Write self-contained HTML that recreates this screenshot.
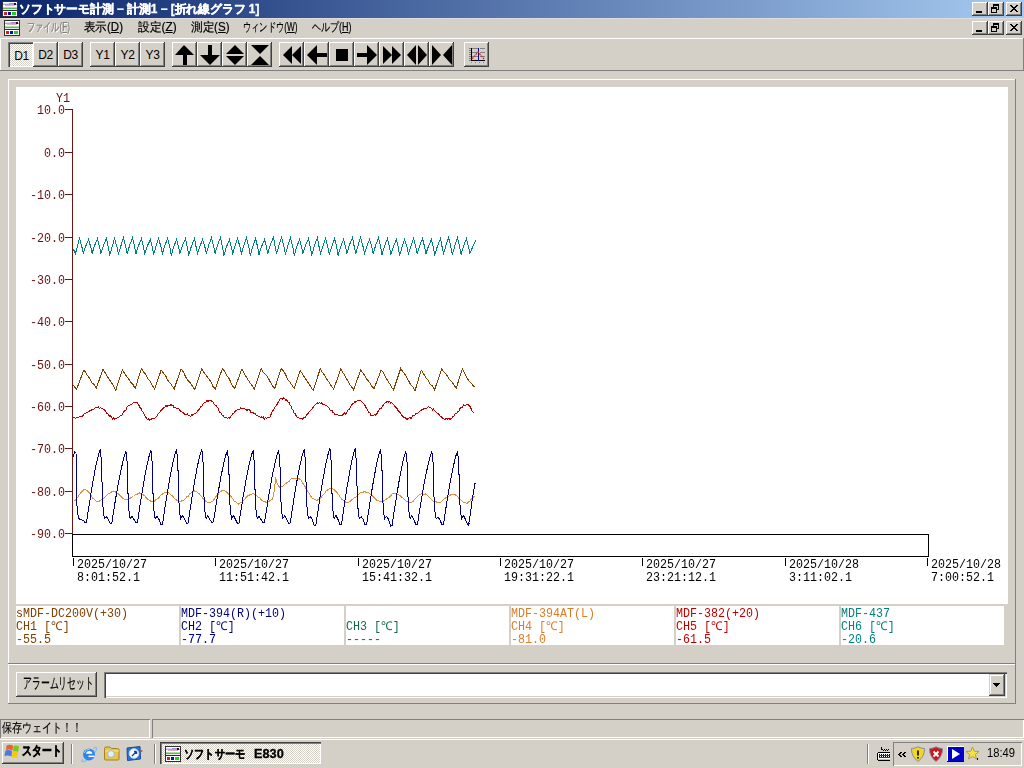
<!DOCTYPE html>
<html><head><meta charset="utf-8">
<style>
*{margin:0;padding:0;box-sizing:border-box}
html,body{width:1024px;height:768px;overflow:hidden;background:#D4D0C8;font-family:"Liberation Sans",sans-serif;font-size:12px;color:#000;position:relative}
.a{position:absolute}
.raised{background:#D4D0C8;box-shadow:inset -1px -1px 0 #404040, inset 1px 1px 0 #fff, inset -2px -2px 0 #808080}
.tb{position:absolute;top:42px;width:25px;height:25px;background:#D4D0C8;box-shadow:inset -1px -1px 0 #404040, inset 1px 1px 0 #fff, inset -2px -2px 0 #808080}
.tb span{position:absolute;left:0;top:7px;width:100%;text-align:center;font-size:12px;line-height:13px;letter-spacing:-0.3px}
.cap{position:absolute;width:16px;height:14px;background:#D4D0C8;box-shadow:inset -1px -1px 0 #404040, inset 1px 1px 0 #fff, inset -2px -2px 0 #808080}
.mono{font-family:"Liberation Mono",monospace}
.mt{position:absolute;font-family:"Liberation Mono",monospace;font-size:12px;line-height:13px;white-space:pre;transform:scaleX(0.972);transform-origin:0 0}
.menu{position:absolute;top:20px;font-size:12px;line-height:14px;transform-origin:0 0;white-space:nowrap;-webkit-text-stroke:0.2px currentColor}
</style></head><body>
<!-- title bar -->
<div class="a" style="left:0;top:0;width:1024px;height:18px;background:linear-gradient(to right,#0A246A,#A6CAF0)"></div>
<div class="a" style="left:19px;top:2px;color:#fff;font-weight:bold;font-size:12px;line-height:14px;white-space:nowrap;-webkit-text-stroke:0.35px #fff;transform:scaleX(0.985);transform-origin:0 0">ソフトサーモ計測 − 計測1 − [折れ線グラフ 1]</div>
<div class="a" style="left:2px;top:1px;width:16px;height:16px"><svg width="16" height="16" shape-rendering="crispEdges"><rect width="16" height="16" fill="#303030"/><rect x="1" y="1" width="14" height="7" fill="#fff"/><rect x="1" y="2" width="6" height="1" fill="#D8D8F8"/><rect x="7" y="2" width="7" height="1" fill="#9890D8"/><rect x="1" y="3" width="14" height="1" fill="#B0A0E0"/><rect x="3" y="4" width="10" height="1" fill="#E0B0C0"/><rect x="1" y="6" width="14" height="1" fill="#A8E0A0"/><rect x="1" y="7" width="14" height="1" fill="#60B860"/><rect x="12" y="2" width="2" height="2" fill="#400040"/><rect x="1" y="8" width="14" height="1" fill="#E8E8E8"/><rect x="1" y="9" width="14" height="1" fill="#303030"/><rect x="1" y="10" width="14" height="5" fill="#fff"/><rect x="2" y="11" width="3" height="3" fill="#D02020"/><rect x="6" y="11" width="3" height="3" fill="#0010C0"/><rect x="10" y="11" width="4" height="3" fill="#20D020"/></svg></div>
<div class="cap" style="left:972px;top:2px"><svg width="16" height="14" style="position:absolute;left:0;top:0" shape-rendering="crispEdges"><rect x="4" y="9" width="6" height="2" fill="#000"/></svg></div>
<div class="cap" style="left:988px;top:2px"><svg width="16" height="14" style="position:absolute;left:0;top:0" shape-rendering="crispEdges" fill="#000"><rect x="5" y="2" width="6" height="2"/><rect x="10" y="4" width="1" height="4"/><rect x="9" y="7" width="1" height="1"/><rect x="5" y="4" width="1" height="1"/><rect x="3" y="5" width="6" height="2"/><rect x="3" y="7" width="1" height="4"/><rect x="8" y="7" width="1" height="4"/><rect x="3" y="10" width="6" height="1"/></svg></div>
<div class="cap" style="left:1006px;top:2px"><svg width="16" height="14" style="position:absolute;left:0;top:0" shape-rendering="crispEdges" fill="#000"><rect x="4" y="3" width="1" height="1"/><rect x="5" y="3" width="1" height="1"/><rect x="10" y="3" width="1" height="1"/><rect x="11" y="3" width="1" height="1"/><rect x="5" y="4" width="1" height="1"/><rect x="6" y="4" width="1" height="1"/><rect x="9" y="4" width="1" height="1"/><rect x="10" y="4" width="1" height="1"/><rect x="6" y="5" width="1" height="1"/><rect x="7" y="5" width="1" height="1"/><rect x="8" y="5" width="1" height="1"/><rect x="9" y="5" width="1" height="1"/><rect x="7" y="6" width="1" height="1"/><rect x="8" y="6" width="1" height="1"/><rect x="6" y="7" width="1" height="1"/><rect x="7" y="7" width="1" height="1"/><rect x="8" y="7" width="1" height="1"/><rect x="9" y="7" width="1" height="1"/><rect x="5" y="8" width="1" height="1"/><rect x="6" y="8" width="1" height="1"/><rect x="9" y="8" width="1" height="1"/><rect x="10" y="8" width="1" height="1"/><rect x="4" y="9" width="1" height="1"/><rect x="5" y="9" width="1" height="1"/><rect x="10" y="9" width="1" height="1"/><rect x="11" y="9" width="1" height="1"/></svg></div>
<!-- menu bar -->
<div class="a" style="left:0;top:18px;width:1024px;height:1px;background:#DEDCE2"></div>
<div class="a" style="left:4px;top:20px;width:16px;height:16px"><svg width="16" height="16" shape-rendering="crispEdges"><rect width="16" height="16" fill="#303030"/><rect x="1" y="1" width="14" height="7" fill="#fff"/><rect x="1" y="2" width="6" height="1" fill="#D8D8F8"/><rect x="7" y="2" width="7" height="1" fill="#9890D8"/><rect x="1" y="3" width="14" height="1" fill="#B0A0E0"/><rect x="3" y="4" width="10" height="1" fill="#E0B0C0"/><rect x="1" y="6" width="14" height="1" fill="#A8E0A0"/><rect x="1" y="7" width="14" height="1" fill="#60B860"/><rect x="12" y="2" width="2" height="2" fill="#400040"/><rect x="1" y="8" width="14" height="1" fill="#E8E8E8"/><rect x="1" y="9" width="14" height="1" fill="#303030"/><rect x="1" y="10" width="14" height="5" fill="#fff"/><rect x="2" y="11" width="3" height="3" fill="#D02020"/><rect x="6" y="11" width="3" height="3" fill="#0010C0"/><rect x="10" y="11" width="4" height="3" fill="#20D020"/></svg></div>
<div class="menu" style="left:27px;transform:scaleX(0.679);color:#808080;text-shadow:1px 1px 0 #fff">ファイル(<u>F</u>)</div>
<div class="menu" style="left:84px;transform:scaleX(0.958);">表示(<u>D</u>)</div>
<div class="menu" style="left:138px;transform:scaleX(0.980);">設定(<u>Z</u>)</div>
<div class="menu" style="left:191px;transform:scaleX(0.963);">測定(<u>S</u>)</div>
<div class="menu" style="left:243px;transform:scaleX(0.687);">ウィンドウ(<u>W</u>)</div>
<div class="menu" style="left:312px;transform:scaleX(0.75);">ヘルプ(<u>H</u>)</div>
<div class="cap" style="left:972px;top:21px"><svg width="16" height="14" style="position:absolute;left:0;top:0" shape-rendering="crispEdges"><rect x="4" y="9" width="6" height="2" fill="#000"/></svg></div>
<div class="cap" style="left:988px;top:21px"><svg width="16" height="14" style="position:absolute;left:0;top:0" shape-rendering="crispEdges" fill="#000"><rect x="5" y="2" width="6" height="2"/><rect x="10" y="4" width="1" height="4"/><rect x="9" y="7" width="1" height="1"/><rect x="5" y="4" width="1" height="1"/><rect x="3" y="5" width="6" height="2"/><rect x="3" y="7" width="1" height="4"/><rect x="8" y="7" width="1" height="4"/><rect x="3" y="10" width="6" height="1"/></svg></div>
<div class="cap" style="left:1006px;top:21px"><svg width="16" height="14" style="position:absolute;left:0;top:0" shape-rendering="crispEdges" fill="#000"><rect x="4" y="3" width="1" height="1"/><rect x="5" y="3" width="1" height="1"/><rect x="10" y="3" width="1" height="1"/><rect x="11" y="3" width="1" height="1"/><rect x="5" y="4" width="1" height="1"/><rect x="6" y="4" width="1" height="1"/><rect x="9" y="4" width="1" height="1"/><rect x="10" y="4" width="1" height="1"/><rect x="6" y="5" width="1" height="1"/><rect x="7" y="5" width="1" height="1"/><rect x="8" y="5" width="1" height="1"/><rect x="9" y="5" width="1" height="1"/><rect x="7" y="6" width="1" height="1"/><rect x="8" y="6" width="1" height="1"/><rect x="6" y="7" width="1" height="1"/><rect x="7" y="7" width="1" height="1"/><rect x="8" y="7" width="1" height="1"/><rect x="9" y="7" width="1" height="1"/><rect x="5" y="8" width="1" height="1"/><rect x="6" y="8" width="1" height="1"/><rect x="9" y="8" width="1" height="1"/><rect x="10" y="8" width="1" height="1"/><rect x="4" y="9" width="1" height="1"/><rect x="5" y="9" width="1" height="1"/><rect x="10" y="9" width="1" height="1"/><rect x="11" y="9" width="1" height="1"/></svg></div>
<!-- toolbar -->
<div class="a" style="left:0;top:38px;width:1024px;height:33px;box-shadow:inset -1px -1px 0 #808080, inset 1px 1px 0 #fff"></div>
<div class="tb" style="left:8px;box-shadow:inset 1px 1px 0 #808080, inset 2px 2px 0 #404040, inset -1px -1px 0 #fff;background:repeating-conic-gradient(#fff 0 25%,#D4D0C8 0 50%) 0 0/2px 2px"><span style="left:1px;top:8px">D1</span></div>
<div class="tb" style="left:33px"><span>D2</span></div>
<div class="tb" style="left:58px"><span>D3</span></div>
<div class="tb" style="left:90px"><span>Y1</span></div>
<div class="tb" style="left:115px"><span>Y2</span></div>
<div class="tb" style="left:140px"><span>Y3</span></div>
<div class="tb" style="left:172px"><svg width="25" height="25" style="position:absolute;left:0;top:0" fill="#000"><polygon points="3,13 11.5,3.5 12.5,3.5 22,13"/><rect x="11" y="13" width="4" height="10"/></svg></div>
<div class="tb" style="left:197px"><svg width="25" height="25" style="position:absolute;left:0;top:0" fill="#000"><rect x="11" y="3" width="4" height="10"/><polygon points="3,13 23,13 13,23"/></svg></div>
<div class="tb" style="left:222px"><svg width="25" height="25" style="position:absolute;left:0;top:0" fill="#000"><polygon points="4,12 13,3 22,12"/><polygon points="4,14 22,14 13,23"/></svg></div>
<div class="tb" style="left:247px"><svg width="25" height="25" style="position:absolute;left:0;top:0" fill="#000"><polygon points="4,3 22,3 13,12"/><polygon points="13,14 22,23 4,23"/></svg></div>
<div class="tb" style="left:279px"><svg width="25" height="25" style="position:absolute;left:0;top:0" fill="#000"><polygon points="4,13 13,4 13,22"/><polygon points="13,13 22,4 22,22"/></svg></div>
<div class="tb" style="left:304px"><svg width="25" height="25" style="position:absolute;left:0;top:0" fill="#000"><polygon points="3,13 13,3 13,23"/><rect x="13" y="11" width="10" height="4"/></svg></div>
<div class="tb" style="left:329px"><svg width="25" height="25" style="position:absolute;left:0;top:0" fill="#000"><rect x="7" y="7" width="12" height="12"/></svg></div>
<div class="tb" style="left:354px"><svg width="25" height="25" style="position:absolute;left:0;top:0" fill="#000"><rect x="3" y="11" width="10" height="4"/><polygon points="13,3 23,13 13,23"/></svg></div>
<div class="tb" style="left:379px"><svg width="25" height="25" style="position:absolute;left:0;top:0" fill="#000"><polygon points="4,4 13,13 4,22"/><polygon points="13,4 22,13 13,22"/></svg></div>
<div class="tb" style="left:404px"><svg width="25" height="25" style="position:absolute;left:0;top:0" fill="#000"><polygon points="3,13 12,3 12,23"/><polygon points="14,3 23,13 14,23"/></svg></div>
<div class="tb" style="left:429px"><svg width="25" height="25" style="position:absolute;left:0;top:0" fill="#000"><polygon points="3,3 12,13 3,23"/><polygon points="23,3 14,13 23,23"/></svg></div>
<div class="tb" style="left:464px"><svg width="25" height="25" style="position:absolute;left:0;top:0" shape-rendering="crispEdges">
<g fill="#808080"><rect x="5" y="6" width="16" height="1"/><rect x="5" y="10" width="16" height="1"/><rect x="5" y="14" width="16" height="1"/><rect x="5" y="18" width="2" height="1"/><rect x="5" y="8" width="2" height="1"/><rect x="5" y="12" width="2" height="1"/><rect x="5" y="16" width="2" height="1"/>
<rect x="7" y="20" width="1" height="1"/><rect x="11" y="20" width="1" height="1"/><rect x="15" y="20" width="1" height="1"/><rect x="19" y="20" width="1" height="1"/></g>
<rect x="7" y="6" width="1" height="13" fill="#000"/><rect x="7" y="18" width="14" height="1" fill="#000"/>
<rect x="14" y="6" width="1" height="13" fill="#101090"/><rect x="15" y="6" width="1" height="12" fill="#C8C8FF"/>
<polyline points="8,17 14,10 20,17" fill="none" stroke="#C83030" stroke-width="1.2" stroke-dasharray="2 0.8" shape-rendering="auto"/>
</svg></div>
<!-- chart panel -->
<div class="a" style="left:8px;top:79px;width:1008px;height:585px;box-shadow:inset -1px -1px 0 #808080, inset 1px 1px 0 #fff"></div>
<div class="a" style="left:16px;top:87px;width:992px;height:517px;background:#fff"></div>
<div class="a" style="left:16px;top:606px;width:163px;height:39px;background:#fff"></div><div class="a" style="left:181px;top:606px;width:163px;height:39px;background:#fff"></div><div class="a" style="left:346px;top:606px;width:163px;height:39px;background:#fff"></div><div class="a" style="left:511px;top:606px;width:163px;height:39px;background:#fff"></div><div class="a" style="left:676px;top:606px;width:163px;height:39px;background:#fff"></div><div class="a" style="left:841px;top:606px;width:163px;height:39px;background:#fff"></div>
<!--CHART-->
<svg class="a" style="left:0;top:0" width="1024" height="768">
<g stroke="#6E1414" stroke-width="1" shape-rendering="crispEdges" fill="none">
<line x1="72.5" y1="109" x2="72.5" y2="534"/>
<line x1="65" y1="109.5" x2="72" y2="109.5"/>
<line x1="65" y1="152.5" x2="72" y2="152.5"/>
<line x1="65" y1="194.5" x2="72" y2="194.5"/>
<line x1="65" y1="237.5" x2="72" y2="237.5"/>
<line x1="65" y1="279.5" x2="72" y2="279.5"/>
<line x1="65" y1="321.5" x2="72" y2="321.5"/>
<line x1="65" y1="364.5" x2="72" y2="364.5"/>
<line x1="65" y1="406.5" x2="72" y2="406.5"/>
<line x1="65" y1="448.5" x2="72" y2="448.5"/>
<line x1="65" y1="491.5" x2="72" y2="491.5"/>
<line x1="65" y1="533.5" x2="72" y2="533.5"/>
</g>
<rect x="72.5" y="534.5" width="856" height="22" fill="none" stroke="#000" shape-rendering="crispEdges"/>
<g stroke="#000" shape-rendering="crispEdges">
<line x1="73.5" y1="558" x2="73.5" y2="566"/>
<line x1="215.5" y1="558" x2="215.5" y2="566"/>
<line x1="358.5" y1="558" x2="358.5" y2="566"/>
<line x1="500.5" y1="558" x2="500.5" y2="566"/>
<line x1="642.5" y1="558" x2="642.5" y2="566"/>
<line x1="785.5" y1="558" x2="785.5" y2="566"/>
<line x1="927.5" y1="558" x2="927.5" y2="566"/>
</g>
<polyline fill="none" stroke="#008080" stroke-width="1" shape-rendering="crispEdges" points="73.5,249.5 75.5,253.5 77.7,245.2 79.5,238.5 81.8,246.5 83.3,253.5 85.9,245.8 88.5,239.5 90.6,246.5 92.1,253.5 94.7,245.2 97.5,238.5 99.4,246.5 100.9,253.5 103.5,245.2 106.5,238.5 108.2,246.5 109.7,255.5 112.3,246.2 114.5,238.5 116.9,246.5 118.4,254.5 121.1,245.2 123.5,237.5 125.7,246.5 127.2,253.5 129.9,244.7 132.5,237.5 134.5,246.5 136.0,253.5 138.7,245.2 141.5,238.5 143.3,246.5 144.8,253.5 147.4,245.8 150.5,239.5 152.1,246.5 153.6,254.5 156.2,245.7 158.5,238.5 160.9,246.5 162.4,253.5 165.0,245.2 167.5,238.5 169.7,246.5 171.2,255.5 173.8,246.7 176.5,239.5 178.4,246.5 179.9,253.5 182.6,245.2 185.5,238.5 187.2,246.5 188.7,255.5 191.4,246.2 194.5,238.5 196.0,246.5 197.5,253.5 200.2,245.8 202.5,239.5 204.8,246.5 206.3,253.5 208.9,244.7 211.5,237.5 213.6,246.5 215.1,253.5 217.7,244.7 220.5,237.5 222.4,246.5 223.9,255.5 226.5,246.7 229.5,239.5 231.2,246.5 232.7,253.5 235.3,245.2 237.5,238.5 239.9,246.5 241.4,253.5 244.1,244.7 246.5,237.5 248.7,246.5 250.2,255.5 252.9,246.2 255.5,238.5 257.5,246.5 259.0,254.5 261.7,246.2 264.5,239.5 266.3,246.5 267.8,253.5 270.4,244.7 273.5,237.5 275.1,246.5 276.6,253.5 279.2,244.7 281.5,237.5 283.9,246.5 285.4,254.5 288.0,245.2 290.5,237.5 292.7,246.5 294.2,255.5 296.8,246.7 299.5,239.5 301.4,246.5 302.9,253.5 305.6,245.2 308.5,238.5 310.2,246.5 311.7,255.5 314.4,245.6 317.5,237.5 319.0,246.5 320.5,253.5 323.2,245.2 325.5,238.5 327.8,246.5 329.3,254.5 332.0,245.7 334.5,238.5 336.6,246.5 338.1,255.5 340.7,246.7 343.5,239.5 345.4,246.5 346.9,253.5 349.5,244.7 352.5,237.5 354.2,246.5 355.7,253.5 358.3,244.7 360.5,237.5 363.0,246.5 364.5,253.5 367.1,245.8 369.5,239.5 371.7,246.5 373.2,253.5 375.9,244.7 378.5,237.5 380.5,246.5 382.0,254.5 384.7,245.7 387.5,238.5 389.3,246.5 390.8,254.5 393.5,246.2 396.5,239.5 398.1,246.5 399.6,255.5 402.2,246.7 404.5,239.5 406.9,246.5 408.4,254.5 411.0,245.7 413.5,238.5 415.7,246.5 417.2,253.5 419.8,245.2 422.5,238.5 424.5,246.5 426.0,253.5 428.6,245.8 431.5,239.5 433.2,246.5 434.7,255.5 437.4,246.2 440.5,238.5 442.0,246.5 443.5,253.5 446.2,244.7 448.5,237.5 450.8,246.5 452.3,254.5 455.0,245.2 457.5,237.5 459.6,246.5 461.1,254.5 463.7,245.7 466.5,238.5 468.4,246.5 469.9,253.5 475.5,240.5"/>
<polyline fill="none" stroke="#804000" stroke-width="1" shape-rendering="crispEdges" points="73.5,385.5 76.5,389.5 83.9,370.0 86.0,373.1 88.0,376.2 90.1,379.2 92.1,383.1 94.2,384.6 96.2,388.5 103.0,369.0 105.1,372.6 107.2,376.2 109.3,379.8 111.5,382.5 113.6,386.1 115.7,390.5 122.3,370.0 124.4,373.1 126.6,376.2 128.8,379.2 130.9,382.3 133.0,384.6 135.2,388.5 141.4,368.5 143.6,371.9 145.8,374.5 148.1,378.8 150.3,381.4 152.5,385.6 154.7,389.0 161.2,370.0 163.4,373.2 165.5,375.5 167.7,380.3 169.9,382.7 172.0,385.8 174.2,389.0 180.9,369.0 183.2,371.6 185.5,376.6 187.8,380.1 190.1,382.7 192.4,386.1 194.7,389.5 201.9,368.5 204.1,372.7 206.3,375.3 208.6,378.8 210.8,381.4 213.0,386.4 215.2,389.0 222.4,368.5 224.4,371.0 226.5,375.2 228.6,377.7 230.6,381.8 232.6,386.0 234.7,388.5 241.9,369.0 243.9,373.1 246.0,376.5 248.1,379.8 250.1,383.1 252.1,385.7 254.2,389.0 261.3,368.5 263.5,372.6 265.8,374.4 268.0,377.7 270.2,381.8 272.5,386.0 274.7,388.5 281.2,368.5 283.4,371.0 285.5,374.4 287.6,379.3 289.8,381.8 292.0,385.2 294.1,388.5 300.2,370.5 302.4,373.8 304.5,377.2 306.7,380.5 308.9,383.8 311.0,387.2 313.2,390.5 320.3,368.5 322.5,372.7 324.8,375.3 327.0,379.6 329.2,382.2 331.5,386.4 333.7,389.0 340.8,369.0 342.9,372.5 345.0,376.0 347.1,379.5 349.3,383.8 351.4,386.5 353.5,390.0 360.7,370.0 362.9,373.1 365.2,376.2 367.4,380.1 369.6,382.3 371.9,386.2 374.1,388.5 381.2,370.0 383.2,372.5 385.3,376.7 387.4,380.0 389.4,383.3 391.4,386.7 393.5,390.0 400.7,368.5 403.1,372.2 405.5,375.0 407.9,379.5 410.3,384.0 412.7,386.8 415.1,390.5 421.2,370.0 423.4,373.3 425.6,377.5 427.9,380.0 430.1,384.1 432.3,385.9 434.5,390.0 441.7,369.0 444.1,372.2 446.5,374.7 448.9,378.8 451.3,381.2 453.7,384.4 456.1,388.5 462.3,369.0 468.5,380.5 474.5,387.0"/>
<polyline fill="none" stroke="#C00000" stroke-width="1" shape-rendering="crispEdges" points="73.5,417.5 74.7,418.0 75.7,418.5 76.8,417.3 77.8,417.1 78.8,417.3 79.8,416.4 80.8,416.9 81.9,416.8 82.9,415.8 83.9,414.1 85.0,413.9 86.0,413.2 87.0,412.5 88.0,411.8 89.0,411.6 90.1,410.4 91.1,410.2 92.1,409.2 93.2,410.1 94.2,409.1 95.2,407.7 96.2,407.9 97.2,407.7 98.3,406.5 99.3,408.5 100.3,407.6 101.4,408.5 102.4,408.6 103.4,409.3 104.4,409.8 105.5,411.3 106.5,413.4 107.5,413.6 108.5,414.7 109.6,416.2 110.6,415.7 111.6,417.4 112.6,419.0 113.7,417.9 114.7,419.0 115.7,418.4 116.8,418.1 117.8,417.6 118.8,417.0 119.8,416.2 120.8,415.2 121.9,415.1 122.9,413.0 123.9,411.8 124.9,410.5 126.0,410.2 127.0,407.0 128.0,405.9 129.0,405.3 130.1,404.8 131.1,405.0 132.1,403.9 133.1,402.9 134.2,402.1 135.2,403.0 136.2,402.7 137.2,402.8 138.3,404.9 139.3,405.7 140.3,408.3 141.3,408.6 142.3,411.5 143.4,412.4 144.4,414.7 145.4,417.3 146.4,417.6 147.5,419.7 148.5,418.8 149.5,420.0 150.5,419.4 151.6,419.1 152.6,418.2 153.6,418.5 154.6,418.2 155.7,417.3 156.7,416.3 157.7,414.7 158.7,413.1 159.8,412.4 160.8,410.8 161.8,409.7 162.8,408.7 163.9,407.8 164.9,407.0 165.9,405.3 166.9,406.9 168.0,405.1 169.0,406.0 170.0,405.6 171.0,404.7 172.1,405.5 173.1,405.4 174.1,407.8 175.1,407.9 176.2,408.0 177.2,408.7 178.2,408.4 179.2,409.1 180.3,410.9 181.3,411.6 182.3,412.3 183.3,412.5 184.4,414.1 185.4,414.7 186.4,414.6 187.4,414.0 188.5,415.8 189.5,415.4 190.5,416.5 191.5,414.9 192.6,415.1 193.6,414.1 194.6,413.4 195.7,413.1 196.7,412.1 197.7,411.0 198.8,409.8 199.8,408.6 200.8,406.4 201.8,406.2 202.9,404.5 203.9,402.9 204.9,402.9 206.0,402.1 207.0,400.4 208.0,401.9 209.1,400.1 210.1,400.5 211.1,400.7 212.2,401.7 213.2,402.0 214.2,404.1 215.2,405.0 216.2,405.1 217.3,407.2 218.3,408.5 219.3,412.3 220.3,412.4 221.4,413.5 222.4,415.9 223.4,416.0 224.4,417.8 225.5,417.3 226.5,417.5 227.5,418.4 228.5,417.5 229.6,418.4 230.6,416.1 231.6,415.7 232.6,413.6 233.7,413.5 234.7,411.9 235.7,410.8 236.7,410.4 237.7,409.6 238.8,409.0 239.8,409.6 240.8,407.5 241.8,409.0 242.9,408.7 243.9,407.9 244.9,409.1 245.9,409.5 247.0,410.4 248.0,409.3 249.0,409.8 250.1,410.4 251.1,413.0 252.1,412.1 253.1,412.7 254.2,413.8 255.2,413.4 256.2,415.0 257.2,415.6 258.3,416.2 259.3,416.7 260.3,417.1 261.4,417.0 262.4,417.9 263.4,417.1 264.4,419.3 265.5,417.5 266.5,418.5 267.5,417.8 268.5,417.7 269.6,417.8 270.6,415.6 271.6,413.1 272.6,411.3 273.6,409.5 274.6,407.5 275.7,406.5 276.7,405.2 277.7,402.9 278.7,402.4 279.7,399.2 280.8,398.3 281.8,398.2 282.8,399.5 283.8,397.7 284.9,399.1 285.9,400.3 286.9,399.8 287.9,402.1 289.0,402.5 290.0,405.1 291.0,406.3 292.1,409.5 293.1,410.2 294.1,412.9 295.1,413.5 296.2,415.9 297.2,417.2 298.2,417.2 299.2,417.9 300.3,418.8 301.3,418.5 302.3,419.4 303.3,418.0 304.3,417.4 305.3,417.1 306.4,415.6 307.4,414.0 308.4,413.2 309.4,411.4 310.4,410.5 311.4,409.6 312.4,408.3 313.4,407.0 314.4,405.4 315.5,404.4 316.5,403.6 317.5,403.0 318.5,403.6 319.5,402.5 320.5,403.1 321.6,402.8 322.6,404.2 323.6,404.7 324.7,404.4 325.7,405.7 326.7,405.5 327.8,407.0 328.8,408.0 329.9,409.5 330.9,411.0 331.9,410.0 333.0,413.0 334.0,412.8 335.0,414.6 336.1,414.3 337.1,414.8 338.1,415.2 339.2,415.4 340.2,416.0 341.2,415.4 342.2,415.1 343.2,414.6 344.3,412.9 345.3,414.1 346.3,413.1 347.3,411.5 348.3,409.8 349.3,409.6 350.4,407.4 351.4,405.2 352.4,404.0 353.4,403.9 354.4,401.9 355.4,402.1 356.5,401.4 357.5,400.4 358.5,400.6 359.5,400.5 360.5,400.7 361.6,401.4 362.6,402.4 363.7,403.7 364.7,404.8 365.7,407.1 366.8,408.9 367.8,410.2 368.8,412.3 369.9,413.1 370.9,415.6 372.0,414.8 373.0,416.0 374.0,414.8 375.1,414.9 376.1,415.2 377.1,413.2 378.2,411.0 379.2,409.7 380.2,408.2 381.3,408.8 382.3,406.8 383.3,405.0 384.4,403.8 385.4,402.8 386.4,402.1 387.5,401.2 388.5,402.0 389.5,401.6 390.5,403.0 391.6,402.6 392.6,403.5 393.6,404.5 394.6,406.2 395.7,407.1 396.7,408.0 397.7,410.0 398.7,411.5 399.7,411.9 400.8,413.8 401.8,415.5 402.8,416.5 403.8,417.4 404.9,417.5 405.9,418.4 406.9,419.5 407.9,418.4 409.0,418.3 410.0,417.0 411.0,418.5 412.0,417.0 413.1,415.4 414.1,415.8 415.1,415.0 416.2,413.2 417.2,413.9 418.2,412.6 419.2,411.8 420.3,411.0 421.3,410.2 422.3,409.6 423.4,409.0 424.4,408.5 425.4,408.0 426.4,408.2 427.5,407.6 428.5,406.5 429.5,407.1 430.5,407.9 431.6,408.3 432.6,409.9 433.6,408.6 434.6,411.0 435.7,411.4 436.7,412.5 437.7,413.5 438.7,414.0 439.7,415.6 440.8,416.5 441.8,417.4 442.8,418.1 443.8,418.7 444.9,419.6 445.9,418.4 446.9,418.5 447.9,419.4 449.0,418.1 450.0,419.7 451.0,418.1 452.0,418.3 453.1,416.4 454.1,415.9 455.1,413.8 456.2,413.7 457.2,413.0 458.2,411.3 459.3,410.7 460.3,407.6 461.3,407.1 462.4,407.7 463.4,404.9 464.4,405.3 465.4,405.4 466.5,404.6 467.5,404.5 468.5,404.9 469.5,406.0 470.5,407.1 471.5,409.9 472.5,411.5 473.5,412.6 474.5,412.5"/>
<polyline fill="none" stroke="#E0903A" stroke-width="1" shape-rendering="crispEdges" points="73.5,500.5 75.1,500.5 76.8,498.4 78.4,496.2 80.1,493.8 81.7,491.6 83.4,490.0 85.0,489.5 86.5,490.5 88.1,491.3 89.6,493.2 91.2,495.5 92.7,498.3 94.2,499.2 95.8,501.0 97.3,501.0 98.9,501.3 100.5,500.5 102.2,499.4 103.8,498.5 105.4,496.5 107.0,495.0 108.6,493.6 110.3,493.0 111.9,491.7 113.5,491.5 115.1,491.8 116.6,492.7 118.2,493.5 119.8,495.5 121.3,497.0 122.9,498.3 124.4,499.2 126.0,499.5 127.5,499.3 129.0,498.8 130.5,498.0 132.0,497.0 133.5,496.5 135.0,495.0 136.5,494.7 138.0,493.7 139.5,493.0 141.1,493.8 142.8,494.7 144.4,495.5 146.0,497.5 147.6,499.0 149.2,500.3 150.9,501.2 152.5,501.5 154.0,501.7 155.5,499.9 157.0,499.2 158.5,498.3 160.0,496.2 161.5,494.8 163.0,493.6 164.5,492.8 166.0,492.5 167.6,492.3 169.2,493.1 170.8,494.8 172.4,495.7 174.1,498.3 175.7,499.2 177.3,500.9 178.9,501.2 180.5,501.5 182.1,500.7 183.6,500.3 185.2,499.0 186.7,496.9 188.3,496.1 189.8,493.5 191.4,492.7 192.9,491.3 194.5,491.0 196.1,491.3 197.7,492.8 199.3,493.8 200.9,496.0 202.6,498.0 204.2,499.8 205.8,501.2 207.4,502.2 209.0,502.5 210.6,502.1 212.2,501.6 213.8,500.0 215.4,497.0 217.1,495.5 218.7,493.5 220.3,491.4 221.9,490.9 223.5,491.0 225.0,490.8 226.5,491.7 228.0,493.7 229.5,495.0 231.0,496.5 232.5,498.5 234.0,500.8 235.5,501.8 237.0,503.2 238.5,504.0 240.0,503.2 241.5,502.3 243.0,501.0 244.5,499.4 246.1,497.6 247.6,496.0 249.1,495.2 250.6,494.3 252.1,494.0 253.7,493.8 255.3,495.1 256.9,495.8 258.5,497.2 260.1,498.3 261.7,500.2 263.3,501.4 264.9,501.7 266.5,502.5 268.0,502.1 269.5,501.0 271.0,499.9 272.5,499.0 274.5,490.0 275.5,477.5 277.5,484.5 279.5,487.0 281.0,486.3 282.5,486.3 284.0,484.9 285.5,483.9 287.0,482.6 288.6,481.9 290.1,480.1 291.6,478.6 293.1,478.2 294.6,478.2 296.1,478.0 297.7,478.3 299.2,478.8 300.8,479.8 302.4,482.4 303.9,484.8 305.5,487.4 307.1,490.6 308.7,492.7 310.2,495.1 311.8,497.7 313.4,498.7 314.9,499.2 316.5,500.5 318.1,499.7 319.7,499.2 321.3,497.1 322.9,495.2 324.6,493.3 326.2,490.9 327.8,489.8 329.4,488.8 331.0,488.0 332.6,488.8 334.1,489.8 335.6,491.3 337.2,492.7 338.8,494.8 340.3,497.3 341.9,499.2 343.4,500.7 344.9,501.7 346.5,502.5 348.0,502.3 349.5,501.8 351.0,500.5 352.5,499.4 354.0,498.1 355.5,497.2 357.0,495.9 358.5,494.6 360.0,493.0 361.5,492.2 363.0,492.2 364.5,491.5 366.0,492.2 367.5,492.3 369.1,493.2 370.6,494.4 372.1,495.8 373.6,497.2 375.1,498.6 376.6,500.3 378.2,500.7 379.7,501.3 381.2,501.5 382.8,501.3 384.4,500.6 386.0,499.5 387.6,498.2 389.1,497.3 390.7,496.0 392.3,493.9 393.9,493.7 395.5,493.5 397.1,494.3 398.7,494.6 400.3,495.8 401.9,497.2 403.6,498.8 405.2,500.2 406.8,501.4 408.4,502.2 410.0,502.5 411.5,502.2 413.1,501.7 414.6,499.2 416.1,498.0 417.7,496.3 419.2,494.8 420.8,494.3 422.3,493.5 423.8,494.2 425.3,493.9 426.9,494.9 428.4,496.6 429.9,498.0 431.4,499.4 432.9,501.1 434.5,502.1 436.0,501.8 437.5,502.5 439.1,502.3 440.6,502.2 442.1,500.8 443.7,499.1 445.2,498.4 446.8,497.1 448.4,496.4 449.9,495.5 451.4,494.4 453.0,494.2 454.5,494.5 456.0,495.2 457.5,496.4 459.0,498.4 460.5,499.4 462.0,500.9 463.5,502.6 465.0,502.3 466.5,503.6 468.2,502.5 470.0,500.8 471.7,498.6 473.5,496.9 475.2,496.3"/>
<polyline fill="none" stroke="#000080" stroke-width="1" shape-rendering="crispEdges" points="73.5,457.5 74.5,451.5 76.0,452.5 76.5,500.5 77.5,510.5 78.5,518.5 80.5,519.5 83.5,520.5 85.0,522.5 86.5,522.5 88.2,510.9 90.0,499.7 91.7,489.1 93.4,479.1 95.1,469.9 96.8,461.5 98.6,454.4 100.3,449.5 101.5,462.5 102.5,500.5 103.5,513.5 104.5,518.5 106.3,516.5 108.3,519.5 110.3,523.5 111.8,523.0 113.6,511.6 115.3,500.7 117.1,490.3 118.9,480.5 120.7,471.5 122.5,463.3 124.2,456.3 126.0,451.5 127.2,462.5 128.2,500.5 129.2,513.5 130.2,518.5 132.0,516.5 134.0,519.5 136.0,522.5 137.5,522.0 139.2,510.6 140.9,499.7 142.6,489.3 144.2,479.5 145.9,470.5 147.6,462.3 149.3,455.3 151.0,450.5 152.2,462.5 153.2,500.5 154.2,513.5 155.2,518.5 157.0,516.5 159.0,519.5 161.0,524.5 162.5,524.0 164.3,512.1 166.0,500.8 167.8,489.9 169.6,479.8 171.3,470.3 173.1,461.8 174.8,454.5 176.6,449.5 177.8,462.5 178.8,500.5 179.8,513.5 180.8,518.5 182.6,515.5 184.6,519.5 186.6,523.5 188.1,523.0 189.8,511.3 191.6,500.1 193.3,489.4 195.0,479.4 196.7,470.0 198.4,461.6 200.2,454.4 201.9,449.5 203.1,462.5 204.1,500.5 205.1,513.5 206.1,518.5 207.9,515.5 209.9,519.5 211.9,522.5 213.4,522.0 215.2,510.6 216.9,499.7 218.7,489.3 220.4,479.5 222.2,470.5 224.0,462.3 225.7,455.3 227.5,450.5 228.7,462.5 229.7,500.5 230.7,513.5 231.7,518.5 233.5,515.5 235.5,519.5 237.5,523.5 239.0,523.0 240.8,511.4 242.5,500.4 244.3,489.9 246.1,479.9 247.8,470.8 249.6,462.5 251.3,455.4 253.1,450.5 254.3,462.5 255.3,500.5 256.3,513.5 257.3,518.5 259.1,516.5 261.1,519.5 263.1,522.5 264.6,522.0 266.4,510.6 268.1,499.7 269.9,489.3 271.6,479.5 273.4,470.5 275.2,462.3 276.9,455.3 278.7,450.5 279.9,462.5 280.9,500.5 281.9,513.5 282.9,518.5 284.7,515.5 286.7,519.5 288.7,523.5 290.2,523.0 292.0,511.3 293.7,500.1 295.5,489.4 297.2,479.4 299.0,470.0 300.8,461.6 302.5,454.4 304.3,449.5 305.5,462.5 306.5,500.5 307.5,513.5 308.5,518.5 310.3,516.5 312.3,519.5 314.3,526.0 315.8,525.5 317.6,513.2 319.4,501.5 321.1,490.3 322.9,479.8 324.7,470.0 326.4,461.2 328.2,453.7 330.0,448.5 331.2,462.5 332.2,500.5 333.2,513.5 334.2,518.5 336.0,515.5 338.0,519.5 340.0,525.0 341.5,524.5 343.2,512.4 344.9,500.8 346.6,489.8 348.4,479.4 350.1,469.7 351.8,461.0 353.5,453.6 355.2,448.5 356.4,462.5 357.4,500.5 358.4,513.5 359.4,518.5 361.2,516.5 363.2,519.5 365.2,525.0 366.7,524.5 368.4,512.5 370.2,501.1 371.9,490.2 373.6,480.0 375.4,470.5 377.1,461.9 378.9,454.5 380.6,449.5 381.8,462.5 382.8,500.5 383.8,513.5 384.8,518.5 386.6,516.5 388.6,519.5 390.6,526.0 392.1,525.5 393.8,513.7 395.6,502.4 397.3,491.7 399.0,481.6 400.7,472.2 402.4,463.7 404.2,456.5 405.9,451.5 407.1,462.5 408.1,500.5 409.1,513.5 410.1,518.5 411.9,515.5 413.9,519.5 415.9,525.0 417.4,524.5 419.2,512.9 421.0,501.7 422.8,491.1 424.6,481.1 426.5,471.9 428.3,463.5 430.1,456.4 431.9,451.5 433.1,462.5 434.1,500.5 435.1,513.5 436.1,518.5 437.9,517.5 439.9,519.5 441.9,525.0 443.4,524.5 445.2,512.9 446.9,501.7 448.7,491.1 450.4,481.1 452.2,471.9 454.0,463.5 455.7,456.4 457.5,451.5 458.7,462.5 459.7,500.5 460.7,513.5 461.7,518.5 463.5,515.5 465.5,519.5 467.5,524.0 469.0,523.5 468.5,525.5 470.5,512.5 472.5,497.5 475.2,482.5"/>
</svg>
<!--/CHART-->
<!--TEXT-->
<div class="mt" style="left:56px;top:93px;color:#6A1010;">Y1</div>
<div class="mt" style="left:37px;top:105px;color:#6A1010;">10.0</div>
<div class="mt" style="left:44px;top:148px;color:#6A1010;">0.0</div>
<div class="mt" style="left:30px;top:190px;color:#6A1010;">-10.0</div>
<div class="mt" style="left:30px;top:233px;color:#6A1010;">-20.0</div>
<div class="mt" style="left:30px;top:275px;color:#6A1010;">-30.0</div>
<div class="mt" style="left:30px;top:317px;color:#6A1010;">-40.0</div>
<div class="mt" style="left:30px;top:360px;color:#6A1010;">-50.0</div>
<div class="mt" style="left:30px;top:402px;color:#6A1010;">-60.0</div>
<div class="mt" style="left:30px;top:444px;color:#6A1010;">-70.0</div>
<div class="mt" style="left:30px;top:487px;color:#6A1010;">-80.0</div>
<div class="mt" style="left:30px;top:529px;color:#6A1010;">-90.0</div>
<div class="mt" style="left:77px;top:559px;color:#000;">2025/10/27</div>
<div class="mt" style="left:77px;top:572px;color:#000;">8:01:52.1</div>
<div class="mt" style="left:219px;top:559px;color:#000;">2025/10/27</div>
<div class="mt" style="left:219px;top:572px;color:#000;">11:51:42.1</div>
<div class="mt" style="left:362px;top:559px;color:#000;">2025/10/27</div>
<div class="mt" style="left:362px;top:572px;color:#000;">15:41:32.1</div>
<div class="mt" style="left:504px;top:559px;color:#000;">2025/10/27</div>
<div class="mt" style="left:504px;top:572px;color:#000;">19:31:22.1</div>
<div class="mt" style="left:646px;top:559px;color:#000;">2025/10/27</div>
<div class="mt" style="left:646px;top:572px;color:#000;">23:21:12.1</div>
<div class="mt" style="left:789px;top:559px;color:#000;">2025/10/28</div>
<div class="mt" style="left:789px;top:572px;color:#000;">3:11:02.1</div>
<div class="mt" style="left:931px;top:559px;color:#000;">2025/10/28</div>
<div class="mt" style="left:931px;top:572px;color:#000;">7:00:52.1</div>
<div class="mt" style="left:16px;top:608px;color:#804000;">sMDF-DC200V(+30)</div>
<div class="mt" style="left:16px;top:621px;color:#804000;">CH1 [℃]</div>
<div class="mt" style="left:16px;top:634px;color:#804000;">-55.5</div>
<div class="mt" style="left:181px;top:608px;color:#000080;">MDF-394(R)(+10)</div>
<div class="mt" style="left:181px;top:621px;color:#000080;">CH2 [℃]</div>
<div class="mt" style="left:181px;top:634px;color:#000080;">-77.7</div>
<div class="mt" style="left:346px;top:608px;color:#14684A;"></div>
<div class="mt" style="left:346px;top:621px;color:#14684A;">CH3 [℃]</div>
<div class="mt" style="left:346px;top:634px;color:#14684A;">-----</div>
<div class="mt" style="left:511px;top:608px;color:#DC7C28;">MDF-394AT(L)</div>
<div class="mt" style="left:511px;top:621px;color:#DC7C28;">CH4 [℃]</div>
<div class="mt" style="left:511px;top:634px;color:#DC7C28;">-81.0</div>
<div class="mt" style="left:676px;top:608px;color:#C00000;">MDF-382(+20)</div>
<div class="mt" style="left:676px;top:621px;color:#C00000;">CH5 [℃]</div>
<div class="mt" style="left:676px;top:634px;color:#C00000;">-61.5</div>
<div class="mt" style="left:841px;top:608px;color:#008080;">MDF-437</div>
<div class="mt" style="left:841px;top:621px;color:#008080;">CH6 [℃]</div>
<div class="mt" style="left:841px;top:634px;color:#008080;">-20.6</div>
<!--/TEXT-->
<!-- bottom panel -->
<div class="a" style="left:8px;top:664px;width:1008px;height:40px;box-shadow:inset -1px -1px 0 #808080, inset 1px 1px 0 #fff"></div>
<div class="a raised" style="left:16px;top:672px;width:81px;height:25px"></div>
<div class="a" style="left:104px;top:672px;width:903px;height:26px;background:#fff;box-shadow:inset 1px 1px 0 #808080, inset 2px 2px 0 #404040, inset -1px -1px 0 #fff, inset -2px -2px 0 #D4D0C8"></div>
<div class="a" style="left:989px;top:674px;width:16px;height:22px;background:#D4D0C8;box-shadow:inset -1px -1px 0 #404040, inset 1px 1px 0 #D4D0C8, inset -2px -2px 0 #808080, inset 2px 2px 0 #fff"><svg width="16" height="22" style="position:absolute;left:0;top:0" shape-rendering="crispEdges" fill="#000"><rect x="4" y="9" width="7" height="1"/><rect x="5" y="10" width="5" height="1"/><rect x="6" y="11" width="3" height="1"/><rect x="7" y="12" width="1" height="1"/></svg></div>
<!-- status bar -->
<div class="a" style="left:0;top:719px;width:150px;height:19px;box-shadow:inset 1px 1px 0 #808080, inset -1px -1px 0 #fff"></div>
<div class="a" style="left:152px;top:719px;width:872px;height:19px;box-shadow:inset 1px 1px 0 #808080, inset -1px -1px 0 #fff"></div>
<!-- taskbar -->
<div class="a" style="left:0;top:738px;width:1024px;height:30px;background:#D4D0C8;border-top:1px solid #D4D0C8;box-shadow:inset 0 1px 0 #fff"></div>

<div class="a" style="left:23px;top:675px;font-size:14.5px;line-height:16px;white-space:nowrap;transform-origin:0 0;transform:scaleX(0.59);-webkit-text-stroke:0.2px #000" id="alarm">アラームリセット</div>
<div class="a" style="left:2px;top:720px;font-size:13px;line-height:15px;white-space:nowrap;transform-origin:0 0;transform:scaleX(0.77);-webkit-text-stroke:0.15px #000" id="stat">保存ウェイト！！</div>
<div class="a raised" style="left:2px;top:742px;width:62px;height:22px"></div>
<svg class="a" style="left:4px;top:744px" width="16" height="16">
<path d="M2.5 1.5 Q5 0 9 1.5 L8.5 6.5 Q5 5 2 6 Z" fill="#E8642C"/>
<path d="M9.5 2 Q12 1 15 2.5 L14.2 8 Q12 7 9 7.5 Z" fill="#7CC820"/>
<path d="M1.5 6.5 Q4.5 5.5 8 7 L7.5 12.5 Q4 11 0.5 12 Z" fill="#4C78E0"/>
<path d="M8.5 7.8 Q11.5 7.2 14 8.6 L13.2 14 Q11 13 7.8 13.8 Z" fill="#F8C810"/>
</svg>
<div class="a" style="left:22px;top:744px;font-size:13px;font-weight:bold;line-height:14px;white-space:nowrap;transform-origin:0 0;transform:scaleX(0.76);-webkit-text-stroke:0.5px #000" id="start">スタート</div>
<div class="a" style="left:71px;top:744px;width:2px;height:20px;box-shadow:inset -1px 0 0 #fff, inset 1px 0 0 #808080"></div>
<div class="a" style="left:154px;top:744px;width:2px;height:20px;box-shadow:inset -1px 0 0 #fff, inset 1px 0 0 #808080"></div>
<svg class="a" style="left:80px;top:745px" width="18" height="18">
<path d="M3 14.5 Q1 16 2.5 16.5 Q5 17 10 13" fill="none" stroke="#80C0F0" stroke-width="1.3"/>
<path d="M13 3.5 Q16 1.5 16.5 3 Q17 5 14 8" fill="none" stroke="#80C0F0" stroke-width="1.3"/>
<circle cx="9" cy="9.5" r="6" fill="#2F86E8"/>
<path d="M6 8.8 Q6.5 6 9.2 6 Q12 6 12.3 8.8 Z" fill="#fff"/>
<rect x="8.5" y="10.6" width="6" height="1.5" fill="#fff"/>
<path d="M4 8 Q6 4 10 4" stroke="#A0D0FF" stroke-width="1" fill="none"/>
</svg>
<svg class="a" style="left:103px;top:745px" width="18" height="17">
<path d="M1.5 3.5 Q1.5 2 3 2 h4 l1.5 1.5 h6 Q16 3.5 16 5 v9 Q16 15 15 15 h-12 Q1.5 15 1.5 14 Z" fill="#E8C450" stroke="#A8801C" stroke-width="1"/>
<path d="M2 6 h14" stroke="#F8E49C" stroke-width="1"/>
<circle cx="8" cy="9" r="3.4" fill="#DCF2FA" stroke="#90B0C0" stroke-width="0.8"/>
</svg>
<svg class="a" style="left:126px;top:745px" width="17" height="17">
<path d="M1 3 L14 1.5 L14.5 14 L1.5 15.5 Z" fill="#2C70D0" stroke="#1A4C9C" stroke-width="1"/>
<circle cx="8" cy="8.5" r="4.8" fill="#F4FAFF" stroke="#B8D8F0"/>
<path d="M6 11 L10.5 6.5 M10.5 6.5 h-2.5 M10.5 6.5 v2.5" stroke="#104090" stroke-width="1.3" fill="none"/>
<circle cx="15.5" cy="6" r="1.1" fill="#E05020"/>
</svg>
<div class="a" style="left:160px;top:742px;width:161px;height:22px;background:repeating-conic-gradient(#fff 0 25%,#D4D0C8 0 50%) 0 0/2px 2px;box-shadow:inset 1px 1px 0 #404040, inset 2px 2px 0 #808080, inset -1px -1px 0 #fff"></div>
<div class="a" style="left:165px;top:746px;width:16px;height:16px"><svg width="16" height="16" shape-rendering="crispEdges"><rect width="16" height="16" fill="#303030"/><rect x="1" y="1" width="14" height="7" fill="#fff"/><rect x="1" y="2" width="6" height="1" fill="#D8D8F8"/><rect x="7" y="2" width="7" height="1" fill="#9890D8"/><rect x="1" y="3" width="14" height="1" fill="#B0A0E0"/><rect x="3" y="4" width="10" height="1" fill="#E0B0C0"/><rect x="1" y="6" width="14" height="1" fill="#A8E0A0"/><rect x="1" y="7" width="14" height="1" fill="#60B860"/><rect x="12" y="2" width="2" height="2" fill="#400040"/><rect x="1" y="8" width="14" height="1" fill="#E8E8E8"/><rect x="1" y="9" width="14" height="1" fill="#303030"/><rect x="1" y="10" width="14" height="5" fill="#fff"/><rect x="2" y="11" width="3" height="3" fill="#D02020"/><rect x="6" y="11" width="3" height="3" fill="#0010C0"/><rect x="10" y="11" width="4" height="3" fill="#20D020"/></svg></div>
<div class="a" style="left:184px;top:747px;font-size:12px;font-weight:bold;line-height:14px;white-space:nowrap;transform-origin:0 0;transform:scaleX(0.85);-webkit-text-stroke:0.3px #000" id="task">ソフトサーモ</div><div class="a" style="left:254px;top:747px;font-size:12px;font-weight:bold;line-height:14px;white-space:nowrap;transform-origin:0 0;transform:scaleX(1.06);-webkit-text-stroke:0.3px #000" id="task2">E830</div>
<div class="a" style="left:867px;top:744px;width:2px;height:20px;box-shadow:inset -1px 0 0 #fff, inset 1px 0 0 #808080"></div>
<svg class="a" style="left:876px;top:746px" width="14" height="16" shape-rendering="crispEdges" fill="#000">
<rect x="5" y="1" width="1" height="3"/><rect x="6" y="3" width="1" height="1"/><rect x="7" y="4" width="1" height="1"/><rect x="8" y="3" width="1" height="1"/><rect x="9" y="4" width="1" height="1"/><rect x="10" y="3" width="1" height="1"/><rect x="11" y="4" width="1" height="1"/><rect x="12" y="3" width="1" height="1"/>
<rect x="2" y="6" width="12" height="1"/><rect x="1" y="7" width="1" height="7"/><rect x="2" y="14" width="12" height="1"/><rect x="2" y="7" width="12" height="7" fill="#fff"/>
<rect x="3" y="8" width="1" height="1"/><rect x="5" y="8" width="1" height="1"/><rect x="7" y="8" width="1" height="1"/><rect x="9" y="8" width="1" height="1"/><rect x="11" y="8" width="1" height="1"/><rect x="13" y="8" width="1" height="1"/>
<rect x="3" y="9" width="11" height="1" fill="#404040"/>
<rect x="3" y="10" width="1" height="1"/><rect x="5" y="10" width="1" height="1"/><rect x="7" y="10" width="1" height="1"/><rect x="9" y="10" width="1" height="1"/><rect x="11" y="10" width="1" height="1"/><rect x="13" y="10" width="1" height="1"/>
<rect x="3" y="11" width="11" height="1" fill="#404040"/><rect x="2" y="13" width="12" height="1" fill="#C0C0C0"/>
</svg>
<div class="a" style="left:893px;top:742px;width:129px;height:24px;box-shadow:inset 1px 1px 0 #808080, inset -1px -1px 0 #fff"></div>
<svg class="a" style="left:898px;top:752px" width="9" height="5" shape-rendering="crispEdges" fill="#000">
<path d="M2 0h2v1h-1v1h-1v1h1v1h1v1h-2v-1h-1v-1h-1v-1h1v-1h1z"/><path d="M6 0h2v1h-1v1h-1v1h1v1h1v1h-2v-1h-1v-1h-1v-1h1v-1h1z"/>
</svg>
<svg class="a" style="left:911px;top:746px" width="15" height="16">
<path d="M7 0.8 Q10 2.5 13.5 2.5 Q14 10 7 15.5 Q0 10 0.5 2.5 Q4 2.5 7 0.8Z" fill="#F0D820" stroke="#8A8AA8"/><rect x="6.2" y="4.5" width="1.6" height="5" fill="#000"/><rect x="6.2" y="11" width="1.6" height="1.6" fill="#000"/>
</svg>
<svg class="a" style="left:929px;top:746px" width="15" height="16">
<path d="M7 0.8 Q10 2.5 13.5 2.5 Q14 10 7 15.5 Q0 10 0.5 2.5 Q4 2.5 7 0.8Z" fill="#C81820" stroke="#8A8AA8"/><path d="M4.5 5.5 L9.5 10.5 M9.5 5.5 L4.5 10.5" stroke="#fff" stroke-width="1.8"/>
</svg>
<svg class="a" style="left:947px;top:746px" width="17" height="16" shape-rendering="crispEdges">
<rect x="0" y="0" width="17" height="16" fill="#0000C8"/><rect x="0" y="0" width="17" height="1" fill="#fff"/><rect x="0" y="0" width="1" height="16" fill="#fff"/><rect x="0" y="15" width="17" height="1" fill="#000040"/><path d="M5 3 L13 8 L5 13 Z" fill="#fff" shape-rendering="auto"/>
</svg>
<svg class="a" style="left:966px;top:746px" width="14" height="15">
<path d="M6.5 1 L8.3 5.2 L13 5.5 L9.3 8.5 L10.5 13 L6.5 10.5 L2.5 13 L3.7 8.5 L0 5.5 L4.7 5.2 Z" fill="#F8E040" stroke="#A09040" stroke-width="0.8"/><rect x="11" y="12" width="1" height="2" fill="#000"/>
</svg>
<div class="a" style="left:987px;top:746px;font-size:12px;line-height:14px;white-space:nowrap;transform-origin:0 0;transform:scaleX(0.93)" id="clock">18:49</div>
</body></html>
